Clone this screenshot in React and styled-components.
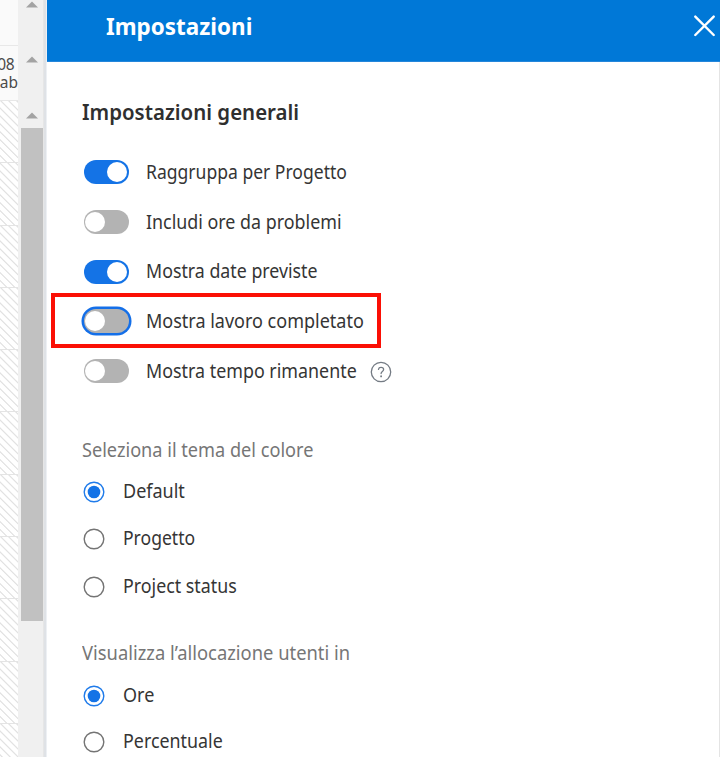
import React from "react";
import styled, { createGlobalStyle } from "styled-components";

const GlobalStyle = createGlobalStyle`
  * { box-sizing: border-box; }
  body { margin: 0; background: #fff; overflow: hidden; font-family: "Noto Sans", sans-serif; }
`;

const Page = styled.div`
  display: flex;
  width: 720px;
  height: 757px;
  overflow: hidden;
`;

const Timeline = styled.aside`
  flex: 0 0 18px;
  display: flex;
  flex-direction: column;
  overflow: hidden;
  background: #fafafa;
`;

const MonthCell = styled.div`
  flex: 0 0 46px;
  border-bottom: 1px solid #e8e8e8;
`;

const DayCell = styled.div`
  flex: 0 0 55px;
  display: flex;
  flex-direction: column;
  align-items: flex-end;
  padding-top: 9px;
  border-bottom: 1px solid #e8e8e8;
  color: #4b4b4b;
  font-size: 15.5px;
  line-height: 18px;
`;

const DayNumber = styled.span`
  margin-right: 4px;
  letter-spacing: -0.5px;
`;

const DayName = styled.span`
  letter-spacing: 0;
`;

const HatchCell = styled.div`
  flex: 0 0 62.3px;
  border-bottom: 1px solid #e4e4e4;
  background: repeating-linear-gradient(45deg, #fff 0 3.6px, #e2e2e2 4.4px 4.8px, #fff 5.6px);
`;

const ScrollColumn = styled.div`
  flex: 0 0 25px;
  display: flex;
  flex-direction: column;
  align-items: center;
  padding-left: 2px;
  background: #f0f0f0;
`;

const Arrow = styled.svg`
  display: block;
  flex: none;
  width: 12px;
  height: 7px;
  margin-top: ${(p) => p.$gap}px;
  fill: #a3a3a3;
`;

const Thumb = styled.div`
  flex: 0 0 493px;
  width: 22px;
  margin-top: 9px;
  background: #c1c1c1;
`;

const Divider = styled.div`
  flex: 0 0 4px;
  background: linear-gradient(90deg, #e6e6e6 0 1px, #dfe2e6 1px 3px, #edf0f4 3px);
`;

const Panel = styled.main`
  flex: 1;
  min-width: 0;
  display: flex;
  flex-direction: column;
  background: #fff;
`;

const PanelHeader = styled.header`
  flex: 0 0 62px;
  display: flex;
  align-items: center;
  justify-content: space-between;
  padding: 0 4px 9px 59px;
  background: #0078d7;
  border-bottom: 1px solid #2586da;
  color: #fff;
`;

const PanelTitle = styled.h1`
  margin: 0;
  font-size: 24px;
  line-height: 32px;
  font-weight: 700;
  transform: scaleX(0.935);
  transform-origin: left;
`;

const CloseButton = styled.button`
  width: 22px;
  height: 22px;
  padding: 0;
  border: 0;
  background: none;
  color: inherit;
  svg { display: block; }
`;

const PanelBody = styled.div`
  flex: 1;
  min-height: 0;
  padding-left: 35px;
  border-right: 1px solid #e4e4e4;
  overflow: hidden;
`;

const SectionTitle = styled.h2`
  margin: 34px 0 0;
  height: 31px;
  font-size: 22px;
  line-height: 30px;
  font-weight: 600;
  color: #2f2f2f;
  white-space: nowrap;
  transform: scaleX(0.929);
  transform-origin: left;
`;

const ToggleList = styled.div`
  display: flex;
  flex-direction: column;
  padding-top: 20px;
`;

const ToggleRow = styled.label`
  position: relative;
  display: flex;
  align-items: center;
  height: 49.7px;
  padding-left: 1.5px;
`;

const Switch = styled.span`
  flex: none;
  display: flex;
  align-items: center;
  justify-content: ${(p) => (p.$on ? "flex-end" : "flex-start")};
  width: 45px;
  height: 24px;
  margin-top: 1px;
  padding: 0 1.5px;
  border-radius: 12px;
  background: ${(p) => (p.$on ? "#1473e6" : "#b3b3b3")};
  box-shadow: ${(p) => (p.$focused ? "0 0 0 2.5px #146fe8" : "none")};
`;

const Knob = styled.span`
  width: 20px;
  height: 20px;
  border-radius: 50%;
  background: #fff;
`;

const Label = styled.span`
  flex: none;
  width: ${(p) => p.$width}px;
  font-size: 20px;
  line-height: 28px;
  color: #353535;
  white-space: nowrap;
  transform: scaleX(${(p) => p.$condense});
  transform-origin: left;
`;

const ToggleLabel = styled(Label)`
  margin-left: 17px;
`;

const HelpIcon = styled.svg`
  flex: none;
  margin: 2px 0 0 13px;
`;

const Highlight = styled.span`
  position: absolute;
  left: -31px;
  top: -3px;
  width: 330px;
  height: 55px;
  border: 4px solid #fb0f05;
  pointer-events: none;
`;

const Group = styled.fieldset`
  margin: 0;
  padding: ${(p) => p.$top}px 0 0;
  border: 0;
`;

const Legend = styled.div`
  height: 28px;
  font-size: 20px;
  line-height: 28px;
  color: #767676;
  white-space: nowrap;
  transform: scaleX(${(p) => p.$condense});
  transform-origin: left;
`;

const RadioList = styled.div`
  display: flex;
  flex-direction: column;
  padding-top: ${(p) => p.$top}px;
`;

const RadioRow = styled.label`
  display: flex;
  align-items: center;
  height: ${(p) => p.$pitch}px;
  gap: 17.5px;
`;

const RadioIcon = styled.svg`
  flex: none;
  margin: 2px 0 0 1px;
`;

const toggles = [
  { text: "Raggruppa per Progetto", on: true, width: 201, condense: 0.877 },
  { text: "Includi ore da problemi", on: false, width: 195, condense: 0.893 },
  { text: "Mostra date previste", on: true, width: 171, condense: 0.889 },
  { text: "Mostra lavoro completato", on: false, focused: true, width: 218, condense: 0.9 },
  { text: "Mostra tempo rimanente", on: false, help: true, width: 211, condense: 0.893 },
];

const themes = [
  { text: "Default", on: true, width: 62, condense: 0.9 },
  { text: "Progetto", width: 72, condense: 0.878 },
  { text: "Project status", width: 114, condense: 0.89 },
];

const units = [
  { text: "Ore", on: true, width: 31, condense: 0.9 },
  { text: "Percentuale", width: 100, condense: 0.893 },
];

const hatchRows = Array.from({ length: 11 }, (_, i) => i);

function UpArrow({ gap }) {
  return (
    <Arrow $gap={gap} viewBox="0 0 12 7">
      <path d="M6 0.5 12 6.5H0Z" />
    </Arrow>
  );
}

function Radio({ on }) {
  return (
    <RadioIcon width="22" height="22" viewBox="0 0 22 22">
      <circle cx="11" cy="11" r="9.8" fill="#fff" stroke={on ? "#1f7bea" : "#747474"} strokeWidth="1.4" />
      {on && <circle cx="11" cy="11" r="6.3" fill="#1473e6" />}
    </RadioIcon>
  );
}

function RadioGroup({ title, condense, top, listTop, pitch, items }) {
  return (
    <Group $top={top}>
      <Legend $condense={condense}>{title}</Legend>
      <RadioList $top={listTop}>
        {items.map((item) => (
          <RadioRow key={item.text} $pitch={pitch}>
            <Radio on={item.on} />
            <Label $width={item.width} $condense={item.condense}>{item.text}</Label>
          </RadioRow>
        ))}
      </RadioList>
    </Group>
  );
}

export default function App() {
  return (
    <Page>
      <GlobalStyle />
      <Timeline>
        <MonthCell />
        <DayCell>
          <DayNumber>08</DayNumber>
          <DayName>ab</DayName>
        </DayCell>
        {hatchRows.map((row) => (
          <HatchCell key={row} />
        ))}
      </Timeline>
      <ScrollColumn>
        <UpArrow gap={1} />
        <UpArrow gap={48} />
        <UpArrow gap={49} />
        <Thumb />
      </ScrollColumn>
      <Divider />
      <Panel>
        <PanelHeader>
          <PanelTitle>Impostazioni</PanelTitle>
          <CloseButton aria-label="Chiudi">
            <svg width="22" height="22" viewBox="0 0 22 22" fill="none" stroke="#fff" strokeWidth="2.4" strokeLinecap="round">
              <path d="M1.3 1.6 19.7 20M19.7 1.6 1.3 20" />
            </svg>
          </CloseButton>
        </PanelHeader>
        <PanelBody>
          <SectionTitle>Impostazioni generali</SectionTitle>
          <ToggleList>
            {toggles.map((item) => (
              <ToggleRow key={item.text}>
                <Switch $on={item.on} $focused={item.focused}>
                  <Knob />
                </Switch>
                <ToggleLabel $width={item.width} $condense={item.condense}>{item.text}</ToggleLabel>
                {item.help && (
                  <HelpIcon width="22" height="22" viewBox="0 0 22 22" fill="none" stroke="#747b84" strokeWidth="1.3" strokeLinecap="round">
                    <circle cx="11" cy="11" r="9.7" />
                    <path d="M8.5 8.3C8.7 7 9.7 6.4 11 6.4s2.6.8 2.6 2.1c0 1.9-2.5 2-2.5 4" />
                    <path d="M11.1 15.2v.2" strokeWidth="1.8" />
                  </HelpIcon>
                )}
                {item.focused && <Highlight />}
              </ToggleRow>
            ))}
          </ToggleList>
          <RadioGroup title="Seleziona il tema del colore" condense={0.907} top={41} listTop={3} pitch={47.3} items={themes} />
          <RadioGroup title="Visualizza l’allocazione utenti in" condense={0.918} top={30} listTop={4} pitch={46.5} items={units} />
        </PanelBody>
      </Panel>
    </Page>
  );
}
